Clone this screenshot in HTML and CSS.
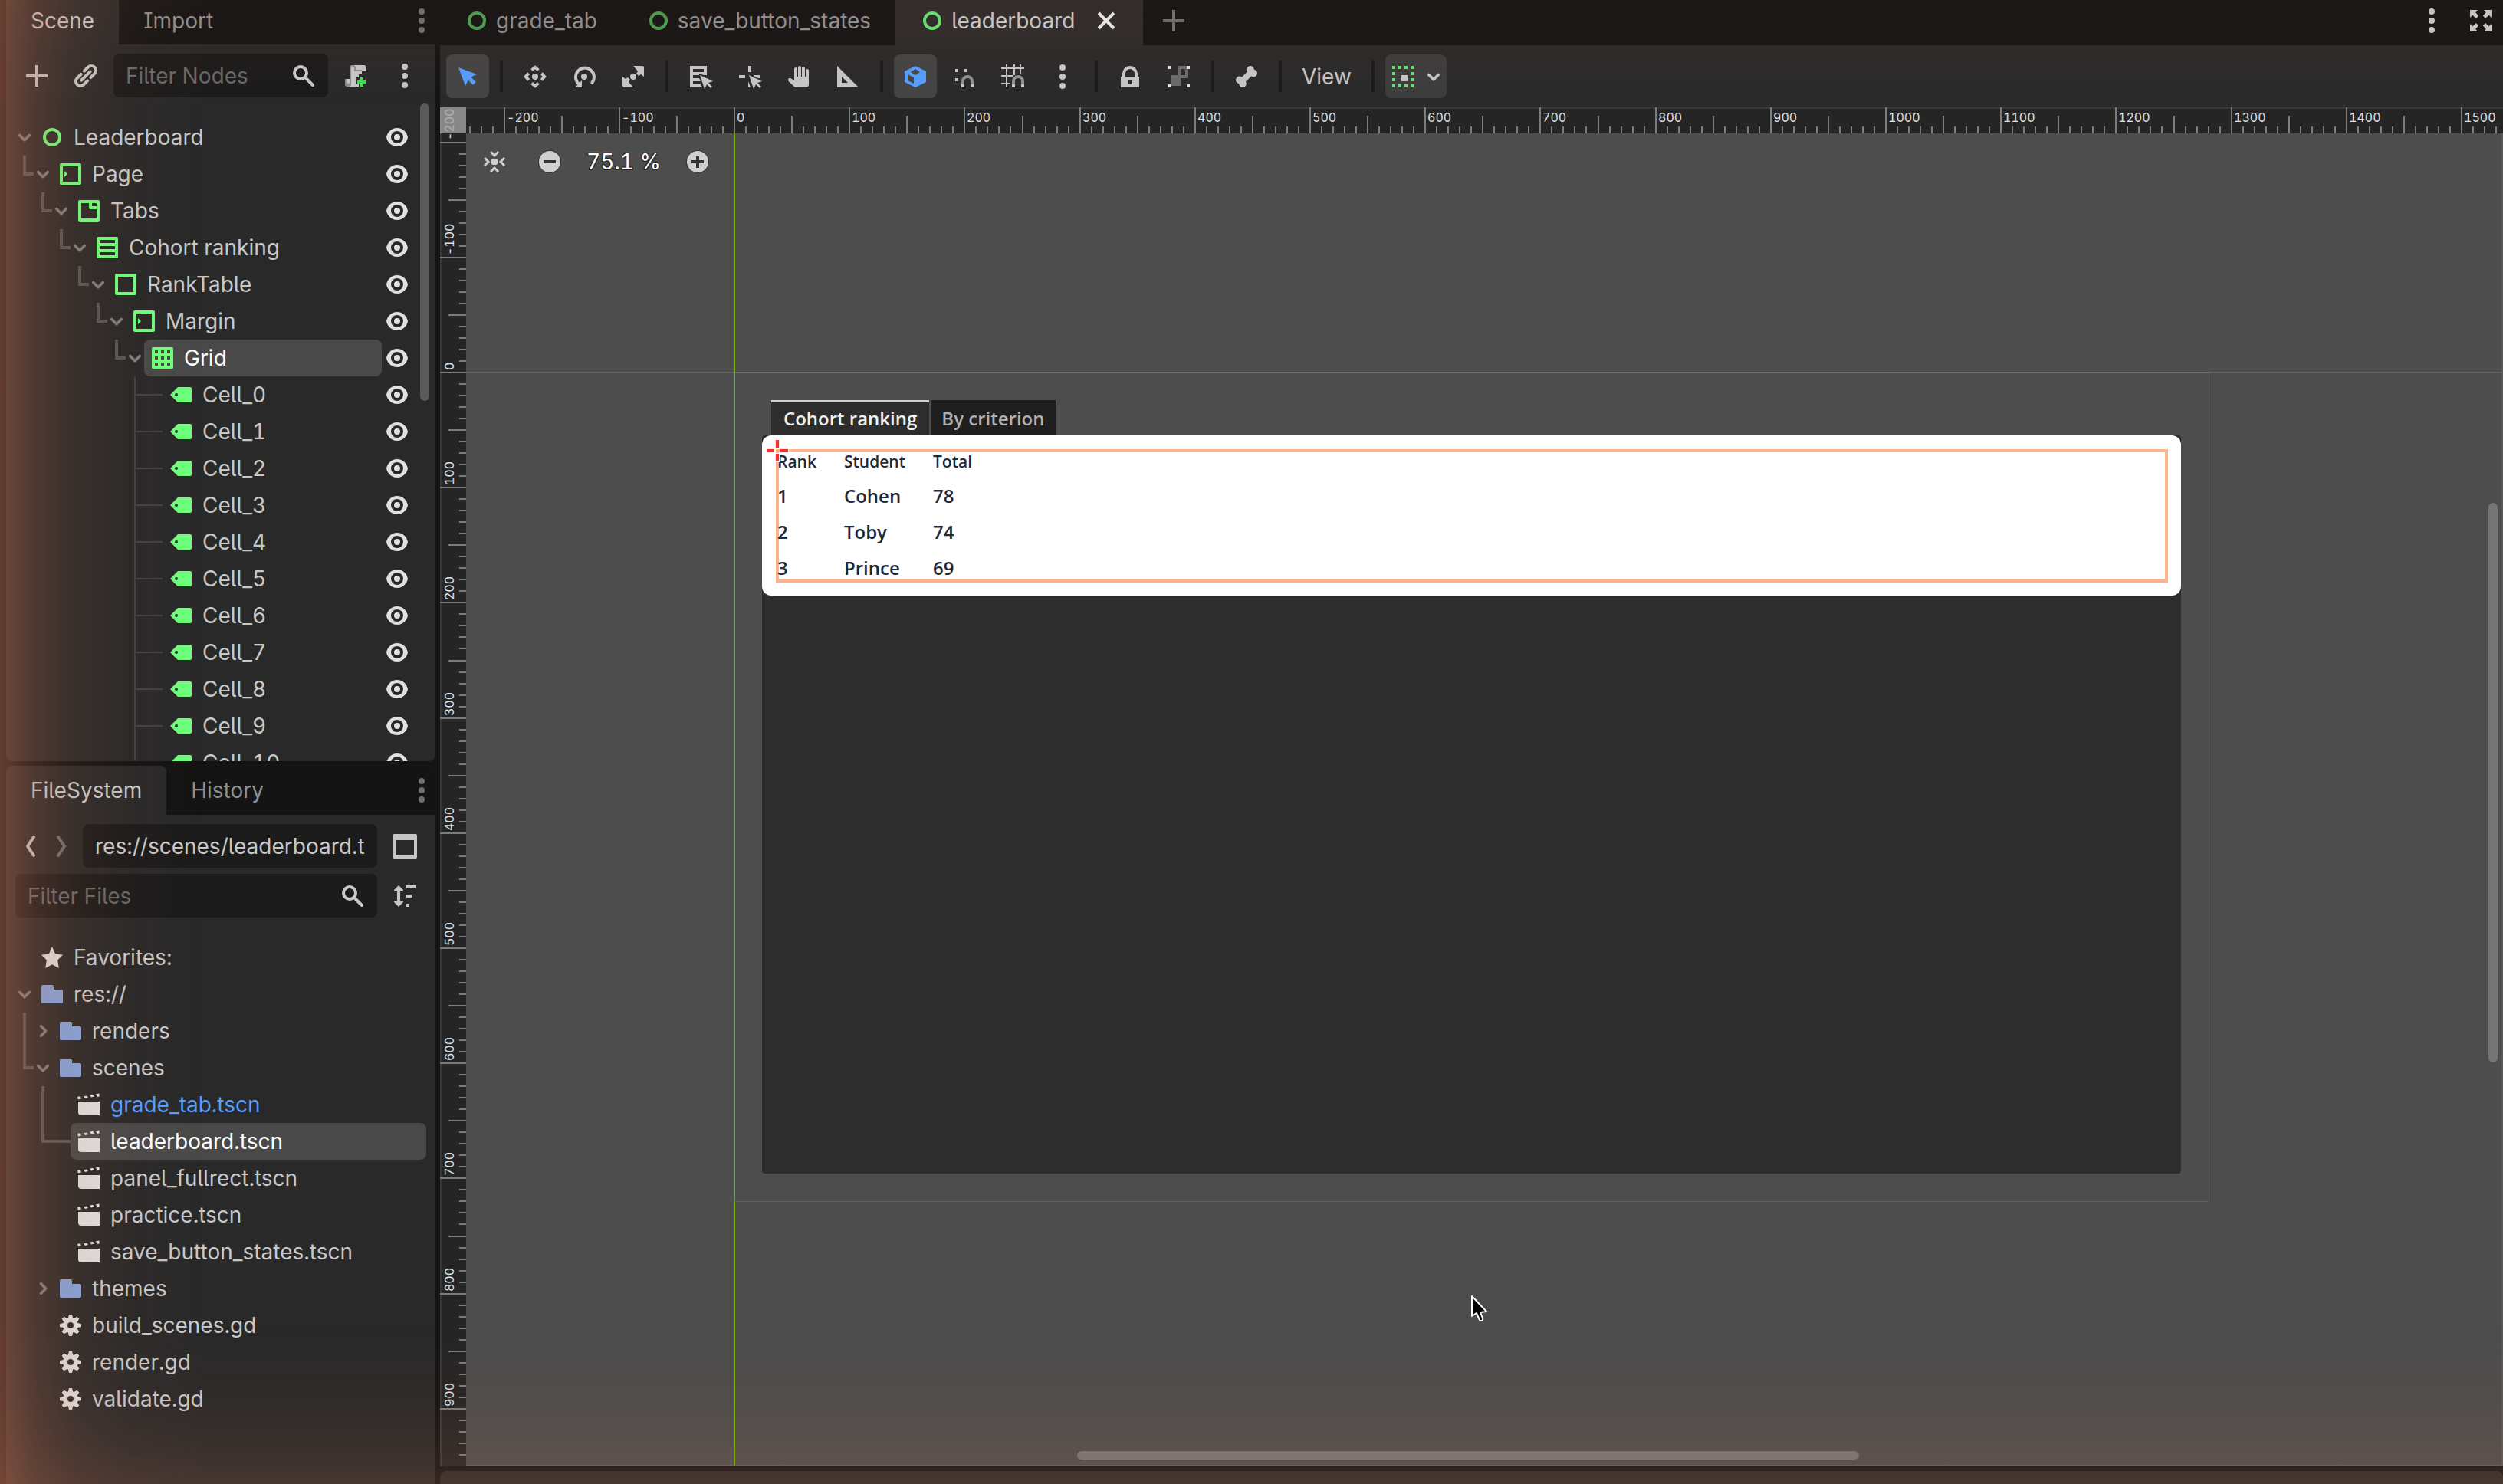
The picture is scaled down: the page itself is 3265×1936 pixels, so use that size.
FILE: index.html
```html
<!DOCTYPE html>
<html lang="en">
	<head>
		<meta charset="utf-8">
		<title>leaderboard.tscn - Godot Engine</title>
		<link rel="stylesheet" href="styles.css">
	</head>
	<body>
		<!-- icon set, 16 unit grid -->
		<svg class="sprite" aria-hidden="true">
			<symbol id="i-dots" viewBox="0 0 16 16"><circle cx="8" cy="2" r="2"/><circle cx="8" cy="8" r="2"/><circle cx="8" cy="14" r="2"/></symbol>
			<symbol id="i-plus" viewBox="0 0 16 16"><path d="M7 1h2v6h6v2H9v6H7V9H1V7h6z"/></symbol>
			<symbol id="i-close" viewBox="0 0 16 16"><path d="M3 3l10 10M13 3L3 13" fill="none" stroke="currentColor" stroke-width="2"/></symbol>
			<symbol id="i-link" viewBox="0 0 16 16"><g transform="rotate(-45 8 8)" fill="none" stroke="currentColor" stroke-width="2" stroke-linecap="round"><path d="M6.500 5H3a3 3 0 0 0 0 6h3.500M9.500 5H13a3 3 0 0 1 0 6H9.500M4 8h8"/></g></symbol>
			<symbol id="i-search" viewBox="0 0 16 16"><circle cx="6" cy="6" r="4" fill="none" stroke="currentColor" stroke-width="2"/><path d="M9 9l5 5" stroke="currentColor" stroke-width="2" stroke-linecap="round"/></symbol>
			<symbol id="i-script" viewBox="0 0 16 16"><path d="M6 1a2 2 0 0 0-2 2v7H1v3a2 2 0 0 0 2 2h7v-2H8v-4h2V7h2V5h3V3a2 2 0 0 0-2-2z"/><path d="M6 1a2 2 0 0 0-2 2v9a1 1 0 0 1-2 0v-2H1v3a2 2 0 0 0 4 0V3a1 1 0 0 1 2 0v2h5V4H8V3a2 2 0 0 0-2-2z" fill="#8f8f8f"/><path d="M11 9h2v2h2v2h-2v2h-2v-2H9v-2h2z" fill="#41dc52"/></symbol>
			<symbol id="i-circle" viewBox="0 0 16 16"><circle cx="8" cy="8" r="5" fill="none" stroke="currentColor" stroke-width="2"/></symbol>
			<symbol id="i-margin" viewBox="0 0 16 16"><path d="M2 2h12v12H2z" fill="none" stroke="currentColor" stroke-width="2" stroke-linejoin="round"/><path d="M4 6l2 2-2 2z"/></symbol>
			<symbol id="i-tabs" viewBox="0 0 16 16"><path d="M2 2h12v12H2zM9 2v4h5" fill="none" stroke="currentColor" stroke-width="2" stroke-linejoin="round"/></symbol>
			<symbol id="i-vbox" viewBox="0 0 16 16"><path d="M2 2h12v12H2zM2 6h12M2 10h12" fill="none" stroke="currentColor" stroke-width="2" stroke-linejoin="round"/></symbol>
			<symbol id="i-panel" viewBox="0 0 16 16"><path d="M2 2h12v12H2z" fill="none" stroke="currentColor" stroke-width="2" stroke-linejoin="round"/></symbol>
			<symbol id="i-grid" viewBox="0 0 16 16"><path d="M2 2h12v12H2zM6 2v12M10 2v12M2 6h12M2 10h12" fill="none" stroke="currentColor" stroke-width="2" stroke-linejoin="round"/></symbol>
			<symbol id="i-label" viewBox="0 0 16 16"><path fill-rule="evenodd" d="M6 3L1 8l5 5h8a1 1 0 0 0 1-1V4a1 1 0 0 0-1-1zM5 7a1 1 0 0 1 0 2 1 1 0 0 1 0-2z"/></symbol>
			<symbol id="i-eye" viewBox="0 0 16 16"><path fill-rule="evenodd" d="M8 2C4 2 1.600 5 1 8c.600 3 3 6 7 6s6.400-3 7-6c-.600-3-3-6-7-6zM8 4a4 4 0 0 1 0 8 4 4 0 0 1 0-8z"/><circle cx="8" cy="8" r="2"/></symbol>
			<symbol id="i-down" viewBox="0 0 16 16"><path d="M3 6l5 5 5-5" fill="none" stroke="currentColor" stroke-width="3" stroke-linecap="round" stroke-linejoin="round"/></symbol>
			<symbol id="i-right" viewBox="0 0 16 16"><path d="M6 3l5 5-5 5" fill="none" stroke="currentColor" stroke-width="3" stroke-linecap="round" stroke-linejoin="round"/></symbol>
			<symbol id="i-back" viewBox="0 0 16 16"><path d="M10 2L6 8l4 6" fill="none" stroke="currentColor" stroke-width="2" stroke-linecap="round" stroke-linejoin="round"/></symbol>
			<symbol id="i-forward" viewBox="0 0 16 16"><path d="M6 2l4 6-4 6" fill="none" stroke="currentColor" stroke-width="2" stroke-linecap="round" stroke-linejoin="round"/></symbol>
			<symbol id="i-split" viewBox="0 0 16 16"><path fill-rule="evenodd" d="M1 0h14a1 1 0 0 1 1 1v14a1 1 0 0 1-1 1H1a1 1 0 0 1-1-1V1a1 1 0 0 1 1-1zm1 4v10h12V4z"/></symbol>
			<symbol id="i-sort" viewBox="0 0 16 16"><path d="M4 1L1 4v1h2v6H1v1l3 3 3-3v-1H5V5h2V4zM9 1h6v2H9zM9 7h4v2H9zM9 13h2v2H9z"/></symbol>
			<symbol id="i-star" viewBox="0 0 16 16"><path d="M8 1l2.100 4.700 4.900.700-3.400 3.400L12.400 15 8 12.600 3.600 15l.8-5.200L1 6.400l4.900-.7z"/></symbol>
			<symbol id="i-folder" viewBox="0 0 16 16"><path d="M2 2a1 1 0 0 0-1 1v10a1 1 0 0 0 1 1h12a1 1 0 0 0 1-1V6a1 1 0 0 0-1-1H9V3a1 1 0 0 0-1-1z"/></symbol>
			<symbol id="i-scene" viewBox="0 0 16 16"><path d="M1 6h14v9H3a2 2 0 0 1-2-2zM.500 3l2-.500.500 1.800-2 .500zM4.500 2.700l2-.500 1 1.300-2 .500zM8.500 1.900l2-.500 1 1.300-2 .500zM12.500 1.200l2.300-.500v2l-1.300.300z"/></symbol>
			<symbol id="i-gear" viewBox="0 0 16 16"><path fill-rule="evenodd" d="M7 1l-.56 2.260a5 5 0 0 0-.69.28L3.750 2.340 2.340 3.750l1.200 2a5 5 0 0 0-.29.69L1 7v2l2.260.56a5 5 0 0 0 .28.69l-1.200 2 1.410 1.410 2-1.200a5 5 0 0 0 .69.29L7 15h2l.56-2.260a5 5 0 0 0 .69-.28l2 1.200 1.410-1.410-1.200-2a5 5 0 0 0 .29-.69L15 9V7l-2.260-.56a5 5 0 0 0-.28-.69l1.200-2-1.410-1.410-2 1.200a5 5 0 0 0-.69-.29L9 1zM8 6a2 2 0 0 1 0 4 2 2 0 0 1 0-4z"/></symbol>
			<symbol id="i-select" viewBox="0 0 16 16"><path d="M2 2l4.500 12 1.800-3.800L11.500 13.400l1.900-1.900-3.200-3.200L14 6.500z"/></symbol>
			<symbol id="i-move" viewBox="0 0 16 16"><circle cx="8" cy="8" r="2"/><path d="M5.800 3.800L8 1.900l2.200 1.900M5.800 12.200L8 14.100l2.200-1.900M3.800 5.800L1.900 8l1.900 2.200M12.200 5.800L14.100 8l-1.900 2.200" fill="none" stroke="currentColor" stroke-width="2"/></symbol>
			<symbol id="i-rotate" viewBox="0 0 16 16"><circle cx="8" cy="8" r="2"/><path d="M5 13.200A6 6 0 1 1 13.200 12" fill="none" stroke="currentColor" stroke-width="2" stroke-linecap="round"/><path d="M2 15h4.500V10.500z"/></symbol>
			<symbol id="i-scale" viewBox="0 0 16 16"><circle cx="8" cy="8" r="2"/><path d="M8 1h6a1 1 0 0 1 1 1v6l-2-1.500-1.500 1L10 6l1-1.500zM8 15H2a1 1 0 0 1-1-1V8l2 1.500 1.500-1L6 10l-1 1.500z"/></symbol>
			<symbol id="i-listselect" viewBox="0 0 16 16"><path d="M1 1h11v6h-2l-3-1v1H3v2h4l1 2H3v2h5l1 2H1zm2 2v2h7V3z" fill-rule="evenodd"/><path d="M7.500 7l3 9 1.500-3 2.500 2.500 1-1-2.500-2.500L16 11z"/></symbol>
			<symbol id="i-pivot" viewBox="0 0 16 16"><path d="M7 1h2v4H7zM1 7h4v2H1zM11 7h4v2h-1.500L11 8zM7 11l1.500 4H7z"/><path d="M7.500 7l3 9 1.500-3 2.500 2.500 1-1-2.500-2.500L16 11z"/></symbol>
			<symbol id="i-pan" viewBox="0 0 16 16"><path d="M5.500 15L1.300 11a1.200 1.200 0 0 1 1.700-1.700L5 10.500V3a1 1 0 0 1 2 0v5h.5V2a1 1 0 0 1 2 0v6h.5V2.500a1 1 0 0 1 2 0V8h.5V4a1 1 0 0 1 2 0v9a2 2 0 0 1-2 2z"/></symbol>
			<symbol id="i-ruler" viewBox="0 0 16 16"><path fill-rule="evenodd" d="M1 1v14h14zm3 7l4 4H4z"/></symbol>
			<symbol id="i-cube" viewBox="0 0 16 16"><path fill-rule="evenodd" d="M8 1L1 4.500v7L8 15l7-3.500v-7zm0 2l3 2-3 2-3-2zM3 6.500l4 2v4L3 10.500z"/></symbol>
			<symbol id="i-smartsnap" viewBox="0 0 16 16"><path d="M2 3h2v2H2zM8 3h2v2H8zM2 9h2v2H2z"/><path d="M7 13v-2a3 3 0 0 1 6 0v2" fill="none" stroke="#919191" stroke-width="2"/><path d="M6 13h2v2H6zM12 13h2v2h-2z"/></symbol>
			<symbol id="i-gridsnap" viewBox="0 0 16 16"><path d="M3 0h1v2h4V0h1v2h3V0h1v2h2v1h-2v3h-1V3H9v4H8V3H4v4h4v1H4v4h2v1H4v2H3v-2H0v-1h3V8H0V7h3V3H0V2h3z"/><path d="M8 13v-2a3 3 0 0 1 6 0v2" fill="none" stroke="#919191" stroke-width="2"/><path d="M7 13h2v2H7zM13 13h2v2h-2z"/></symbol>
			<symbol id="i-lock" viewBox="0 0 16 16"><path fill-rule="evenodd" d="M8 1a5 5 0 0 0-5 5v2H2v7h12V8h-1V6a5 5 0 0 0-5-5zm0 2a3 3 0 0 1 3 3v2H5V6a3 3 0 0 1 3-3zM7 10h2v3H7z"/></symbol>
			<symbol id="i-group" viewBox="0 0 16 16"><path d="M7 1h7v8H9v5H3V7h4zm2 2v4h3V3z" fill="#6a6a6a" fill-rule="evenodd"/><path d="M1 1h2v2H1zM13 1h2v2h-2zM1 13h2v2H1zM13 13h2v2h-2z" fill="#e0e0e0"/></symbol>
			<symbol id="i-bone" viewBox="0 0 16 16"><path d="M5 11l6-6" stroke="currentColor" stroke-width="4"/><circle cx="10.500" cy="3.400" r="2.400"/><circle cx="12.600" cy="5.800" r="2.400"/><circle cx="3.400" cy="10.200" r="2.400"/><circle cx="5.500" cy="12.600" r="2.400"/></symbol>
			<symbol id="i-anchor" viewBox="0 0 16 16"><path d="M1 1h2v2H1zM5 1h2v2H5zM9 1h2v2H9zM13 1h2v2h-2zM1 5h2v2H1zM13 5h2v2h-2zM1 9h2v2H1zM13 9h2v2h-2zM1 13h2v2H1zM5 13h2v2H5zM9 13h2v2H9zM13 13h2v2h-2z" fill="#66e070"/><path d="M7 7h4v4H7z"/></symbol>
			<symbol id="i-expand" viewBox="0 0 16 16"><path d="M1 1h5L4.600 2.600 6.600 4.800 5 6.500 2.700 4.400 1 6zM15 1h-5l1.400 1.600-2 2.200L11 6.500l2.300-2.100L15 6zM1 15h5l-1.400-1.600 2-2.200L5 9.500l-2.300 2.100L1 10zM15 15h-5l1.400-1.600-2-2.200L11 9.500l2.300 2.100L15 10z"/></symbol>
			<symbol id="i-center" viewBox="0 0 16 16"><rect x="6" y="6" width="4" height="4" rx="1"/><path d="M5.500 1.500L8 4l2.500-2.500M5.500 14.500L8 12l2.500 2.500M1.500 5.500L4 8l-2.500 2.500M14.500 5.500L12 8l2.500 2.500" fill="none" stroke="currentColor" stroke-width="1.500"/></symbol>
			<symbol id="i-zoomout" viewBox="0 0 16 16"><circle cx="8" cy="8" r="7.500" fill="#333"/><circle cx="8" cy="8" r="7"/><path d="M4 7h8v2H4z" fill="#333"/></symbol>
			<symbol id="i-zoomin" viewBox="0 0 16 16"><circle cx="8" cy="8" r="7.500" fill="#333"/><circle cx="8" cy="8" r="7"/><path d="M7 4h2v3h3v2H9v3H7V9H4V7h3z" fill="#333"/></symbol>
		</svg>

		<div class="editor">
			<div class="docks">
				<section class="dock scene-dock">
					<div class="tabbar top">
						<button class="tab active">Scene</button>
						<button class="tab">Import</button>
						<button class="tab-menu" aria-label="Dock menu"><svg class="icon"><use href="#i-dots"/></svg></button>
					</div>
					<div class="tools">
						<button class="tool" aria-label="Add node"><svg class="icon"><use href="#i-plus"/></svg></button>
						<button class="tool" aria-label="Instance scene"><svg class="icon"><use href="#i-link"/></svg></button>
						<label class="field"><input type="text" placeholder="Filter Nodes" aria-label="Filter Nodes"><svg class="icon"><use href="#i-search"/></svg></label>
						<button class="tool" aria-label="Attach script"><svg class="icon"><use href="#i-script"/></svg></button>
						<button class="tool" aria-label="More"><svg class="icon"><use href="#i-dots"/></svg></button>
					</div>
					<div class="tree-wrap">
						<ul class="tree nodes">
							<li><div class="row"><button class="arrow"><svg><use href="#i-down"/></svg></button><span class="item"><svg class="icon"><use href="#i-circle"/></svg>Leaderboard</span><button class="eye"><svg class="icon"><use href="#i-eye"/></svg></button></div>
							<ul><li class="elbow"><div class="row"><button class="arrow"><svg><use href="#i-down"/></svg></button><span class="item"><svg class="icon"><use href="#i-margin"/></svg>Page</span><button class="eye"><svg class="icon"><use href="#i-eye"/></svg></button></div>
							<ul><li class="elbow"><div class="row"><button class="arrow"><svg><use href="#i-down"/></svg></button><span class="item"><svg class="icon"><use href="#i-tabs"/></svg>Tabs</span><button class="eye"><svg class="icon"><use href="#i-eye"/></svg></button></div>
							<ul><li class="elbow"><div class="row"><button class="arrow"><svg><use href="#i-down"/></svg></button><span class="item"><svg class="icon"><use href="#i-vbox"/></svg>Cohort ranking</span><button class="eye"><svg class="icon"><use href="#i-eye"/></svg></button></div>
							<ul><li class="elbow"><div class="row"><button class="arrow"><svg><use href="#i-down"/></svg></button><span class="item"><svg class="icon"><use href="#i-panel"/></svg>RankTable</span><button class="eye"><svg class="icon"><use href="#i-eye"/></svg></button></div>
							<ul><li class="elbow"><div class="row"><button class="arrow"><svg><use href="#i-down"/></svg></button><span class="item"><svg class="icon"><use href="#i-margin"/></svg>Margin</span><button class="eye"><svg class="icon"><use href="#i-eye"/></svg></button></div>
							<ul><li class="elbow"><div class="row"><button class="arrow"><svg><use href="#i-down"/></svg></button><span class="item selected"><svg class="icon"><use href="#i-grid"/></svg>Grid</span><button class="eye"><svg class="icon"><use href="#i-eye"/></svg></button></div>
							<ul class="cells">
								<li><div class="row"><span class="item"><svg class="icon"><use href="#i-label"/></svg>Cell_0</span><button class="eye"><svg class="icon"><use href="#i-eye"/></svg></button></div></li>
								<li><div class="row"><span class="item"><svg class="icon"><use href="#i-label"/></svg>Cell_1</span><button class="eye"><svg class="icon"><use href="#i-eye"/></svg></button></div></li>
								<li><div class="row"><span class="item"><svg class="icon"><use href="#i-label"/></svg>Cell_2</span><button class="eye"><svg class="icon"><use href="#i-eye"/></svg></button></div></li>
								<li><div class="row"><span class="item"><svg class="icon"><use href="#i-label"/></svg>Cell_3</span><button class="eye"><svg class="icon"><use href="#i-eye"/></svg></button></div></li>
								<li><div class="row"><span class="item"><svg class="icon"><use href="#i-label"/></svg>Cell_4</span><button class="eye"><svg class="icon"><use href="#i-eye"/></svg></button></div></li>
								<li><div class="row"><span class="item"><svg class="icon"><use href="#i-label"/></svg>Cell_5</span><button class="eye"><svg class="icon"><use href="#i-eye"/></svg></button></div></li>
								<li><div class="row"><span class="item"><svg class="icon"><use href="#i-label"/></svg>Cell_6</span><button class="eye"><svg class="icon"><use href="#i-eye"/></svg></button></div></li>
								<li><div class="row"><span class="item"><svg class="icon"><use href="#i-label"/></svg>Cell_7</span><button class="eye"><svg class="icon"><use href="#i-eye"/></svg></button></div></li>
								<li><div class="row"><span class="item"><svg class="icon"><use href="#i-label"/></svg>Cell_8</span><button class="eye"><svg class="icon"><use href="#i-eye"/></svg></button></div></li>
								<li><div class="row"><span class="item"><svg class="icon"><use href="#i-label"/></svg>Cell_9</span><button class="eye"><svg class="icon"><use href="#i-eye"/></svg></button></div></li>
								<li><div class="row"><span class="item"><svg class="icon"><use href="#i-label"/></svg>Cell_10</span><button class="eye"><svg class="icon"><use href="#i-eye"/></svg></button></div></li>
							</ul>
							</li></ul></li></ul></li></ul></li></ul></li></ul></li></ul></li>
						</ul>
						<div class="tree-scroll"></div>
					</div>
				</section>

				<section class="dock files-dock">
					<div class="tabbar">
						<button class="tab active">FileSystem</button>
						<button class="tab">History</button>
						<button class="tab-menu" aria-label="Dock menu"><svg class="icon"><use href="#i-dots"/></svg></button>
					</div>
					<div class="tools">
						<div class="nav">
							<button aria-label="Back"><svg class="icon"><use href="#i-back"/></svg></button>
							<button aria-label="Forward" disabled><svg class="icon"><use href="#i-forward"/></svg></button>
						</div>
						<label class="field"><input type="text" value="res://scenes/leaderboard.tscn" aria-label="Path"></label>
						<button class="tool" aria-label="Split mode"><svg class="icon"><use href="#i-split"/></svg></button>
					</div>
					<div class="tools second">
						<label class="field"><input type="text" placeholder="Filter Files" aria-label="Filter Files"><svg class="icon"><use href="#i-search"/></svg></label>
						<button class="tool" aria-label="Sort files"><svg class="icon"><use href="#i-sort"/></svg></button>
					</div>
					<div class="tree-wrap">
						<ul class="tree files">
							<li><div class="row"><span class="item"><svg class="icon"><use href="#i-star"/></svg>Favorites:</span></div></li>
							<li><div class="row"><button class="arrow"><svg><use href="#i-down"/></svg></button><span class="item"><svg class="icon folder"><use href="#i-folder"/></svg>res://</span></div>
								<ul>
									<li class="pass"><div class="row"><button class="arrow"><svg><use href="#i-right"/></svg></button><span class="item"><svg class="icon folder"><use href="#i-folder"/></svg>renders</span></div></li>
									<li class="elbow"><div class="row"><button class="arrow"><svg><use href="#i-down"/></svg></button><span class="item"><svg class="icon folder"><use href="#i-folder"/></svg>scenes</span></div>
										<ul>
											<li class="pass"><div class="row"><span class="item open"><svg class="icon"><use href="#i-scene"/></svg>grade_tab.tscn</span></div></li>
											<li class="elbow wide"><div class="row"><span class="item selected"><svg class="icon"><use href="#i-scene"/></svg>leaderboard.tscn</span></div></li>
											<li><div class="row"><span class="item"><svg class="icon"><use href="#i-scene"/></svg>panel_fullrect.tscn</span></div></li>
											<li><div class="row"><span class="item"><svg class="icon"><use href="#i-scene"/></svg>practice.tscn</span></div></li>
											<li><div class="row"><span class="item"><svg class="icon"><use href="#i-scene"/></svg>save_button_states.tscn</span></div></li>
										</ul>
									</li>
									<li><div class="row"><button class="arrow"><svg><use href="#i-right"/></svg></button><span class="item"><svg class="icon folder"><use href="#i-folder"/></svg>themes</span></div></li>
									<li><div class="row"><span class="item"><svg class="icon"><use href="#i-gear"/></svg>build_scenes.gd</span></div></li>
									<li><div class="row"><span class="item"><svg class="icon"><use href="#i-gear"/></svg>render.gd</span></div></li>
									<li><div class="row"><span class="item"><svg class="icon"><use href="#i-gear"/></svg>validate.gd</span></div></li>
								</ul>
							</li>
						</ul>
					</div>
				</section>
			</div>

			<main class="main">
				<div class="scene-tabs">
					<button class="scene-tab"><svg class="icon"><use href="#i-circle"/></svg>grade_tab</button>
					<button class="scene-tab"><svg class="icon"><use href="#i-circle"/></svg>save_button_states</button>
					<button class="scene-tab active"><svg class="icon"><use href="#i-circle"/></svg>leaderboard<svg class="icon close"><use href="#i-close"/></svg></button>
					<button class="new-tab" aria-label="New scene"><svg class="icon"><use href="#i-plus"/></svg></button>
					<div class="window-tools">
						<button aria-label="Menu"><svg class="icon"><use href="#i-dots"/></svg></button>
						<button aria-label="Distraction free"><svg class="icon"><use href="#i-expand"/></svg></button>
					</div>
				</div>

				<div class="toolbar">
					<button class="tool on" aria-label="Select"><svg class="icon"><use href="#i-select"/></svg></button>
					<span class="sep"></span>
					<button class="tool" aria-label="Move"><svg class="icon"><use href="#i-move"/></svg></button>
					<button class="tool" aria-label="Rotate"><svg class="icon"><use href="#i-rotate"/></svg></button>
					<button class="tool" aria-label="Scale"><svg class="icon"><use href="#i-scale"/></svg></button>
					<span class="sep"></span>
					<button class="tool" aria-label="List select"><svg class="icon"><use href="#i-listselect"/></svg></button>
					<button class="tool" aria-label="Pivot"><svg class="icon"><use href="#i-pivot"/></svg></button>
					<button class="tool" aria-label="Pan"><svg class="icon"><use href="#i-pan"/></svg></button>
					<button class="tool" aria-label="Ruler"><svg class="icon"><use href="#i-ruler"/></svg></button>
					<span class="sep"></span>
					<button class="tool on" aria-label="Local space"><svg class="icon"><use href="#i-cube"/></svg></button>
					<button class="tool" aria-label="Smart snap"><svg class="icon"><use href="#i-smartsnap"/></svg></button>
					<button class="tool" aria-label="Grid snap"><svg class="icon"><use href="#i-gridsnap"/></svg></button>
					<button class="tool" aria-label="Snap options"><svg class="icon"><use href="#i-dots"/></svg></button>
					<span class="sep"></span>
					<button class="tool" aria-label="Lock"><svg class="icon"><use href="#i-lock"/></svg></button>
					<button class="tool" aria-label="Group"><svg class="icon"><use href="#i-group"/></svg></button>
					<span class="sep"></span>
					<button class="tool" aria-label="Skeleton"><svg class="icon"><use href="#i-bone"/></svg></button>
					<span class="sep"></span>
					<button class="tool text">View</button>
					<span class="sep"></span>
					<button class="tool anchor" aria-label="Anchor preset"><svg class="icon"><use href="#i-anchor"/></svg><svg class="chev"><use href="#i-down"/></svg></button>
				</div>

				<div class="viewport">
					<div class="ruler ruler-x" id="ruler-x"></div>
					<div class="ruler ruler-y" id="ruler-y"></div>
					<div class="corner"></div>
					<div class="canvas">
						<div class="axis-x"></div>
						<div class="axis-y"></div>
						<div class="bounds"></div>

						<div class="preview">
							<div class="preview-tabs">
								<button class="active">Cohort ranking</button>
								<button>By criterion</button>
							</div>
							<div class="preview-body">
								<div class="card">
									<div class="selection">
										<table>
											<tr><th>Rank</th><th>Student</th><th>Total</th></tr>
											<tr><td>1</td><td>Cohen</td><td>78</td></tr>
											<tr><td>2</td><td>Toby</td><td>74</td></tr>
											<tr><td>3</td><td>Prince</td><td>69</td></tr>
										</table>
										<svg class="pivot" viewBox="0 0 32 32"><g stroke="#ddd" stroke-width="6"><path d="M16 1v11M16 20v11M1 16h11M20 16h11"/></g><g stroke="#fff" stroke-width="5"><path d="M16 1v12M16 19v12M1 16h12M19 16h12"/></g><g stroke="#ff2a2a" stroke-width="4"><path d="M16 2v10M16 20v10M2 16h10M20 16h10"/></g></svg>
									</div>
								</div>
							</div>
						</div>

						<div class="zoom">
							<button aria-label="Center view"><svg class="icon"><use href="#i-center"/></svg></button>
							<button aria-label="Zoom out"><svg class="icon"><use href="#i-zoomout"/></svg></button>
							<span>75.1 %</span>
							<button aria-label="Zoom in"><svg class="icon"><use href="#i-zoomin"/></svg></button>
						</div>

						<div class="scroll-v"></div>
						<div class="scroll-h"></div>
						<svg class="cursor" viewBox="0 0 24 38"><path d="M2 2v26l6-4 4 9c1 2 5 1 4-2l-3-8 8-1z" fill="#000" stroke="#fff" stroke-width="2" stroke-linejoin="round"/></svg>
					</div>
				</div>
				<div class="bottom-panel"></div>
			</main>
		</div>
		<div class="glow"></div>

		<script>
			var SCALE = 1.502;

			//draws a tick every 10 units, a label every 100
			function draw_ruler(id, side, origin, from, to){
				var obj = document.getElementById(id);
				var html = "";
				var i, pos, type;

				for (i=from; i<=to; i+=10){
					pos = Math.round(origin + i*SCALE);
					type = (i%100 == 0) ? "major" : (i%50 == 0) ? "half" : "minor";
					html += "<i class='" + type + "' style='" + side + ":" + pos + "px'></i>";
					if (type == "major"){
						html += "<span style='" + side + ":" + pos + "px'>" + i + "</span>";
					}
				}
				obj.innerHTML = html;
			}

			draw_ruler("ruler-x", "left", 349, -230, 1530);
			draw_ruler("ruler-y", "top", 345, -200, 940);
		</script>
	</body>
</html>
```
FILE: styles.css
```css
*, *::before, *::after{
	box-sizing: border-box;
}

html, body{
	height: 100%;
}

body{
	margin: 0;
	overflow: hidden;
	background: #141414;
	color: #c8c8c8;
	font-family: Inter, "Noto Sans", sans-serif;
	font-size: 28px;
	line-height: 36px;
	font-feature-settings: "calt" 0, "ss04" 1, "tnum" 1, "cv05" 1, "cv08" 1;
}

button, input{
	font: inherit;
	font-feature-settings: inherit;
	color: inherit;
	background: none;
	border: 0;
	padding: 0;
	margin: 0;
}

ul{
	list-style: none;
	margin: 0;
	padding: 0;
}

.sprite{
	display: none;
}

.icon{
	width: 32px;
	height: 32px;
	flex: none;
	fill: currentColor;
}

.editor{
	display: grid;
	grid-template-columns: 560px minmax(0, 1fr);
	column-gap: 6px;
	height: 100%;
	padding-left: 8px;
}

/*left docks*/
.docks{
	display: grid;
	grid-template-rows: minmax(0, 993fr) minmax(0, 937fr);
	row-gap: 6px;
	min-height: 0;
}

.dock{
	display: flex;
	flex-direction: column;
	min-height: 0;
	overflow: hidden;
	background: #292929;
	border-radius: 8px;
}

.scene-dock{
	border-radius: 0 0 8px 8px;
}

.files-dock{
	border-radius: 8px 8px 0 0;
}

.tabbar{
	display: flex;
	flex: none;
	height: 64px;
	background: #141414;
}

.tabbar.top{
	height: 58px;
}

.tab{
	padding: 0 32px;
	color: #8f8f8f;
}

.tabbar.top .tab, .tabbar.top .tab-menu{
	padding-bottom: 5px;
}

.tab.active{
	background: #292929;
	color: #c8c8c8;
	border-radius: 8px 8px 0 0;
}

.tabbar.top .tab.active{
	border-radius: 0;
}

.tab-menu{
	display: flex;
	align-items: center;
	margin-left: auto;
	padding-right: 2px;
	color: #6f6f6f;
}

.tools{
	display: flex;
	flex: none;
	gap: 8px;
	height: 57px;
	margin: 12px 12px 0;
}

.tools.second{
	margin-top: 8px;
}

.tool{
	display: flex;
	flex: none;
	align-items: center;
	justify-content: center;
	width: 56px;
	border-radius: 8px;
	color: #c6c6c6;
}

.tool.on{
	background: #444;
	color: #569eff;
}

.field{
	display: flex;
	flex: 1;
	align-items: center;
	min-width: 0;
	padding: 0 16px;
	background: #1b1b1b;
	border-radius: 8px;
}

.field input{
	flex: 1;
	width: 0;
	min-width: 0;
	outline: 0;
}

.field input::placeholder{
	color: #686868;
	opacity: 1;
}

.nav{
	display: flex;
}

.nav button{
	display: flex;
	align-items: center;
	justify-content: center;
	width: 40px;
}

.nav button:disabled{
	color: #6f6f6f;
}

/*trees*/
.tree-wrap{
	display: flex;
	flex: 1;
	min-height: 0;
	overflow: hidden;
	padding: 0 12px;
}

.tree{
	flex: 1;
	padding-top: 28px;
}

.tree-scroll{
	width: 12px;
	height: 388px;
	margin: 8px -4px 0 16px;
	background: #5a5a5a;
	border-radius: 6px;
}

.tree ul{
	margin-left: 24px;
}

.tree li{
	position: relative;
}

.row{
	display: flex;
	align-items: center;
	height: 48px;
}

.row > .item:first-child{
	margin-left: 24px;
}

.arrow{
	display: flex;
	width: 24px;
	padding: 0 2px;
	color: #7c7c7c;
}

.arrow svg{
	width: 20px;
	height: 20px;
}

.item{
	display: flex;
	flex: 1;
	align-items: center;
	gap: 12px;
	height: 48px;
	padding-left: 8px;
	border-radius: 8px;
	white-space: nowrap;
}

.item.selected{
	background: #494949;
	color: #fff;
}

.item.open{
	color: #569eff;
}

.nodes .item .icon{
	color: #6eff7a;
}

.files .item .icon{
	color: #e0e0e0;
}

.files .item .folder{
	color: #83a5dc;
}

.eye{
	display: flex;
	margin-left: 4px;
	margin-right: -2px;
	color: #e0e0e0;
}

/*guide lines between parent and child*/
.elbow::before, .pass::before{
	content: "";
	position: absolute;
	left: -14px;
	top: 0;
	width: 14px;
	height: 26px;
	border-left: 4px solid #555;
	border-bottom: 4px solid #555;
}

.pass::before{
	height: 48px;
	border-bottom: 0;
}

.elbow.wide::before{
	width: 38px;
}

.cells li::before, .cells li::after{
	content: "";
	position: absolute;
	background: #424242;
}

.cells li::before{
	left: -13px;
	top: 0;
	bottom: 0;
	width: 2px;
}

.cells li::after{
	left: -11px;
	top: 23px;
	width: 35px;
	height: 2px;
}

/*main area*/
.main{
	display: flex;
	flex-direction: column;
	min-height: 0;
}

.scene-tabs{
	display: flex;
	flex: none;
	height: 59px;
}

.scene-tab{
	display: flex;
	align-items: center;
	gap: 9px;
	padding: 0 32px 6px;
	color: #8f8f8f;
}

.scene-tab .icon{
	color: #4b9e51;
}

.scene-tab.active{
	background: #2d2b2a;
	color: #c8c8c8;
}

.scene-tab.active .icon{
	color: #66e070;
}

.scene-tab.active .close{
	margin: 0 0 0 16px;
	color: #e8e8e8;
}

.new-tab{
	display: flex;
	align-items: center;
	padding: 0 24px 6px;
	color: #6f6f6f;
}

.window-tools{
	display: flex;
	gap: 32px;
	align-items: center;
	margin-left: auto;
	padding: 0 13px 6px 0;
}

.window-tools button{
	display: flex;
}

.toolbar{
	display: flex;
	flex: none;
	gap: 8px;
	height: 81px;
	padding: 12px 8px;
	background: #2a2a2a;
}

.sep{
	width: 4px;
	height: 41px;
	margin: 8px 6px;
	background: #1b1b1b;
}

.tool.text{
	width: auto;
	padding: 0 12px;
}

.tool.anchor{
	gap: 14px;
	width: 80px;
	background: #3d3d3d;
}

.tool .chev{
	width: 20px;
	height: 20px;
}

.viewport{
	display: grid;
	flex: 1;
	grid-template: 34px minmax(0, 1fr) / 34px minmax(0, 1fr);
	min-height: 0;
	position: relative;
	overflow: hidden;
}

.ruler{
	position: relative;
	overflow: hidden;
	background: #252525;
	color: #e0e0e0;
	font-size: 16px;
	line-height: 20px;
}

.ruler-x{
	grid-area: 1 / 2;
	box-shadow: inset 0 2px #383838;
}

.ruler-y{
	grid-area: 1 / 1 / 3 / 2;
	box-shadow: inset 2px 0 #383838;
}

.ruler i, .ruler span{
	position: absolute;
}

.ruler i{
	background: #7c7c7c;
}

.ruler-x i{
	bottom: 0;
	width: 2px;
	height: 9px;
}

.ruler-x .half{
	height: 23px;
}

.ruler-x .major{
	height: 34px;
}

.ruler-x span{
	top: 3px;
	padding-left: 4px;
}

.ruler-y i{
	right: 0;
	width: 9px;
	height: 2px;
}

.ruler-y .half{
	width: 23px;
}

.ruler-y .major{
	width: 34px;
}

.ruler-y span{
	left: 2px;
	padding-left: 2px;
	transform: rotate(-90deg);
	transform-origin: 0 0;
}

.corner{
	grid-area: 1 / 1;
	z-index: 1;
	background: rgba(160, 160, 160, 0.8);
}

.canvas{
	grid-area: 2 / 2;
	position: relative;
	overflow: hidden;
	background: #4d4d4d;
	border-right: 2px solid #585858;
	border-bottom: 2px solid #5e5e5e;
}

.axis-x, .axis-y, .bounds, .preview, .zoom, .scroll-v, .scroll-h, .cursor, .pivot{
	position: absolute;
}

.axis-x{
	left: 0;
	right: 0;
	top: 311px;
	height: 1px;
	background: #c8384f;
}

.axis-y{
	left: 350px;
	top: 0;
	bottom: 0;
	width: 1px;
	background: #74b400;
}

/*project viewport rectangle, 1280x720*/
.bounds{
	left: 350px;
	top: 311px;
	width: 1924px;
	height: 1083px;
	border: 1px solid #5454a8;
	border-top-color: #9c4a94;
	border-left-color: #6f9a70;
}

.preview{
	left: 386px;
	top: 348px;
	width: 1851px;
	font-family: "Open Sans", "Noto Sans", sans-serif;
	font-feature-settings: normal;
	font-weight: 600;
	font-size: 24px;
}

.preview-tabs{
	display: flex;
	gap: 2px;
	padding-left: 12px;
}

.preview-tabs button{
	height: 46px;
	padding: 0 14px 2px;
	background: #1f1f1f;
	color: #b0b0b0;
	border-top: 3px solid #1f1f1f;
}

.preview-tabs .active{
	padding: 0 16px 2px;
	background: #2d2d2d;
	color: #f0f0f0;
	border-color: #d2d2d2;
}

.preview-body{
	height: 963px;
	background: #2d2d2d;
	border-radius: 4px;
}

.card{
	padding: 18px 17px 17px 18px;
	background: #fff;
	border-radius: 12px;
}

.selection{
	position: relative;
	height: 174px;
	border: 4px solid #ffb38c;
}

.selection table{
	margin: -4px 0 0 -2px;
	border-collapse: collapse;
	color: #1f2937;
	line-height: 36px;
}

.selection th, .selection td{
	padding: 0 36px 11px 0;
	font-weight: 600;
	text-align: left;
}

.selection th{
	font-size: 21px;
	line-height: 32px;
}

.pivot{
	left: -18px;
	top: -18px;
	width: 32px;
	height: 32px;
}

.zoom{
	display: flex;
	align-items: center;
	left: 21px;
	top: 19px;
	color: #cfcfcf;
}

.zoom button{
	display: flex;
	margin-right: 40px;
}

.zoom button + button{
	margin-right: 32px;
}

.zoom span{
	margin-right: 32px;
	color: #fff;
	text-shadow: 1px 1px #222, -1px -1px #222, 1px -1px #222, -1px 1px #222;
}

.scroll-v, .scroll-h{
	background: #757575;
	border-radius: 6px;
}

.scroll-v{
	right: 5px;
	top: 482px;
	width: 12px;
	height: 730px;
}

.scroll-h{
	left: 797px;
	bottom: 6px;
	width: 1020px;
	height: 12px;
}

.cursor{
	left: 1310px;
	top: 1515px;
	width: 24px;
	height: 38px;
}

.bottom-panel{
	flex: none;
	height: 17px;
	margin-top: 6px;
	background: #292929;
	border-radius: 8px 8px 0 0;
}

/*warm light on the window edges*/
.glow{
	position: fixed;
	inset: 0;
	pointer-events: none;
	background:
		linear-gradient(to right, rgba(194, 110, 81, 0.46), rgba(194, 110, 81, 0.24) 46px, rgba(194, 110, 81, 0.1) 100px, rgba(194, 110, 81, 0.03) 170px, rgba(194, 110, 81, 0) 270px),
		linear-gradient(to top, rgba(194, 110, 81, 0.2), rgba(194, 110, 81, 0.11) 50px, rgba(194, 110, 81, 0.04) 110px, rgba(194, 110, 81, 0) 210px),
		linear-gradient(to bottom, rgba(194, 110, 81, 0.06), rgba(194, 110, 81, 0) 140px);
}
```
